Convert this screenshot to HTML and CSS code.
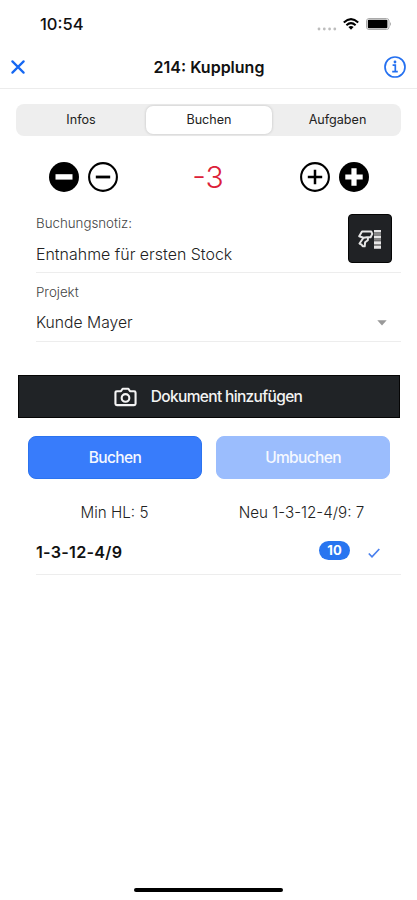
FILE: index.html
```html
<!DOCTYPE html>
<html lang="de">
<head>
<meta charset="utf-8">
<meta name="viewport" content="width=device-width, initial-scale=1">
<title>214: Kupplung</title>
<link rel="stylesheet" href="styles.css">
</head>
<body>
<div class="screen">
  <div class="status">
    <span class="time">10:54</span>
    <div class="indicators">
      <svg class="dots" width="20" height="4" viewBox="0 0 20 4" fill="#bdbdbd"><circle cx="2" cy="2" r="1.4"/><circle cx="7.3" cy="2" r="1.4"/><circle cx="12.6" cy="2" r="1.4"/><circle cx="17.8" cy="2" r="1.4"/></svg>
      <svg class="wifi" width="16" height="12" viewBox="0 0 16 12" fill="none" stroke="#000" stroke-width="2"><path d="M.8 4.5Q8-2.2 15.2 4.5M3.4 7.2Q8 3 12.6 7.2"/><path d="M5.4 9Q8 6.900 10.600 9L8 11.700Z" fill="#000" stroke="none"/></svg>
      <svg class="battery" width="26" height="12" viewBox="0 0 26 12"><rect x=".5" y=".5" width="22.5" height="11" rx="2.5" fill="#fff" stroke="#aaa"/><rect x="1.8" y="1.7" width="19.6" height="8.6" rx="1" fill="#000"/><path d="M24 4q2 2 0 4z" fill="#aaa"/></svg>
    </div>
  </div>
  <header class="header">
    <svg width="14" height="14" viewBox="0 0 14 14" stroke="#1668f2" stroke-width="2.2" stroke-linecap="round"><path d="M1.4 1.4 12.6 12.6M12.6 1.4 1.4 12.6"/></svg>
    <h1 class="title">214: Kupplung</h1>
    <svg width="22" height="22" viewBox="0 0 22 22" fill="none" stroke="#2470f0" stroke-width="1.7"><circle cx="11" cy="11" r="10"/><path d="M8.600 9.200h2.700v6.200M8.200 15.600h5.600"/><circle cx="11" cy="6" r="1.4" fill="#2470f0" stroke="none"/></svg>
  </header>
  <nav class="segments">
    <span class="segment first">Infos</span>
    <span class="segment active">Buchen</span>
    <span class="segment last">Aufgaben</span>
  </nav>
  <section class="counter">
    <div class="pair">
      <svg width="30" height="30" viewBox="0 0 30 30"><circle cx="15" cy="15" r="15"/><path d="M6.500 12.200h17v5.400h-17z" fill="#fff"/></svg>
      <svg width="30" height="30" viewBox="0 0 30 30" fill="none" stroke="#000"><circle cx="15" cy="15" r="13.9" stroke-width="2.1"/><path d="M7.800 15h14.400" stroke-width="2.8"/></svg>
    </div>
    <span class="amount">-3</span>
    <div class="pair">
      <svg width="30" height="30" viewBox="0 0 30 30" fill="none" stroke="#000"><circle cx="15" cy="15" r="13.9" stroke-width="2.1"/><path d="M7.800 15h14.400M15 7.800v14.400" stroke-width="2.5"/></svg>
      <svg width="30" height="30" viewBox="0 0 30 30"><circle cx="15" cy="15" r="15"/><path d="M6.300 15h17.400M15 6.300v17.400" stroke="#fff" stroke-width="5.2"/></svg>
    </div>
  </section>
  <section class="field note">
    <div class="texts">
      <div class="label note-label">Buchungsnotiz:</div>
      <div class="value note-value">Entnahme für ersten Stock</div>
    </div>
    <div class="scan">
      <svg width="24" height="20" viewBox="0 0 24 20" fill="none" stroke="#e6e6e6" stroke-width="2" stroke-linejoin="round"><path d="M4 1.500h9.200l1.100 2.400-1.700 3.300H9L5.500 7.800 1.200 6.200Z"/><path d="M5.500 7.700 1.500 13.500l2 1 1.200 1.800h2l.4-4 2.700-2 .2-3"/><path d="M16 1.200h7M16 7h7M16 12.600h7M16 17.400h7" stroke-width="2.8"/><path d="M16 4h7M16 9.800h7M16 15h7" stroke="#888" stroke-width="2"/></svg>
    </div>
  </section>
  <section class="field project">
    <div class="label project-label">Projekt</div>
    <div class="select"><span class="value project-value">Kunde Mayer</span><svg width="10" height="6" viewBox="0 0 10 6"><path d="M.3.3h9.400L5 5.500z" fill="#999"/></svg></div>
  </section>
  <div class="document">
    <svg width="23" height="20" viewBox="0 0 24 20" fill="none" stroke="#f4f4f4" stroke-width="2.2" stroke-linejoin="round"><path d="M3 4h4.200L9 1.400h6L16.800 4H21q1.500 0 1.500 1.500V17q0 1.500-1.500 1.500H3Q1.500 18.500 1.500 17V5.500Q1.500 4 3 4Z"/><circle cx="12" cy="11" r="4"/></svg>
    <span class="document-text">Dokument hinzufügen</span>
  </div>
  <div class="buttons">
    <div class="button"><span class="book">Buchen</span></div>
    <div class="button disabled"><span class="rebook">Umbuchen</span></div>
  </div>
  <div class="totals">
    <span class="min">Min HL: 5</span>
    <span class="new">Neu 1-3-12-4/9: 7</span>
  </div>
  <div class="location">
    <span class="place">1-3-12-4/9</span>
    <span class="badge">10</span>
    <svg class="check" width="12" height="10" viewBox="0 0 12 10" fill="none" stroke="#4a80ee" stroke-width="1.7"><path d="M.8 5.500 4 8.800 11.300 1"/></svg>
  </div>
  <div class="home"></div>
</div>
</body>
</html>
```
FILE: styles.css
```css
* { box-sizing: border-box; }
body { margin: 0; background: #fff; color: #111; font-family: Inter, "Liberation Sans", sans-serif; }
svg { display: block; flex: none; }
span, .label, .value { white-space: nowrap; }
.screen { width: 417px; height: 900px; display: flex; flex-direction: column; background: #fff; }
.status { height: 48px; padding: 0 25px 0 40px; display: flex; align-items: center; justify-content: space-between; }
.time { font-size: 16.5px; font-weight: 500; }
.indicators { display: flex; align-items: center; }
.dots { margin: 9px 6px 0 0; }
.wifi { margin-right: 7px; }
.header { height: 41px; padding: 0 11px; display: flex; align-items: center; justify-content: space-between; border-bottom: 1px solid #ececec; padding-bottom: 3px; }
.title { margin: 0 0 0 9px; font-size: 16px; font-weight: 600; line-height: 20px; }
.segments { height: 32px; margin: 15px 16px 0; padding: 2px; display: grid; grid-template-columns: 128px 126px 1fr; border-radius: 8px; background: #eee; }
.segment { display: flex; align-items: center; justify-content: center; padding-bottom: 1px; font-size: 12.6px; color: #222; }
.segment.first { padding-right: 2px; }
.segment.last { padding-left: 4px; }
.segment.active { background: #fff; border-radius: 7px; box-shadow: 0 0 3px #0003; }
.counter { height: 61px; margin: 10px 48px 0 49px; display: flex; align-items: center; justify-content: space-between; }
.pair { display: flex; gap: 9px; }
.amount { color: #dc2038; font-size: 30px; font-weight: 300; margin-right: 2px; }
.field { margin-left: 36px; margin-right: 16px; border-bottom: 1px solid #ededed; }
.note { height: 66px; display: flex; justify-content: space-between; padding-right: 9px; }
.label { color: #444; font-size: 13.3px; font-weight: 300; line-height: 16px; }
.value { color: #222; font-size: 15.95px; font-weight: 300; line-height: 20px; }
.texts { padding-top: 8px; }
.note-value { margin-top: 14px; }
.scan { width: 44px; height: 49px; margin-top: 7px; border-radius: 4px; border: 1px solid #050505; background: #202225; display: flex; align-items: center; justify-content: center; padding-top: 2px; }
.project { height: 69px; padding-top: 11px; }
.project-value { font-size: 15.7px; }
.select { margin-top: 13px; padding-right: 14px; display: flex; align-items: center; justify-content: space-between; }
.document { height: 43px; margin: 33px 17px 0 18px; border: 1px solid #050505; background: #202326; color: #f3f3f3; display: flex; align-items: center; justify-content: center; gap: 14px; padding-right: 2px; }
.document-text { font-size: 15.5px; font-weight: 500; letter-spacing: -.65px; }
.buttons { margin: 18px 27px 0 28px; display: grid; grid-template-columns: 1fr 1fr; gap: 14px; }
.button { height: 43px; border-radius: 8px; background: #387cfb; border: 1px solid #2b73ef; color: #f5f8ff; display: flex; align-items: center; justify-content: center; font-size: 15.5px; font-weight: 500; letter-spacing: -.65px; }
.button.disabled { background: #9bbdfd; border-color: #9bbdfd; }
.totals { height: 20px; margin: 23px 22px 0 21px; display: grid; grid-template-columns: 1fr 1fr; justify-items: center; align-items: center; font-size: 15.2px; font-weight: 300; color: #222; }
.location { height: 53px; margin: 0 16px 0 36px; padding: 19px 21px 0 0; display: flex; align-items: flex-start; border-bottom: 1px solid #ededed; }
.place { font-size: 16.2px; line-height: 22px; font-weight: 600; letter-spacing: .25px; margin-right: auto; }
.badge { width: 31px; height: 19px; border-radius: 10px; background: #2875f0; color: #fff; font-size: 13px; font-weight: 700; line-height: 19px; text-align: center; }
.check { margin: 7px 0 0 18px; }
.home { width: 149px; height: 4px; border-radius: 2px; background: #000; margin: auto auto 8px 134px; }
```
